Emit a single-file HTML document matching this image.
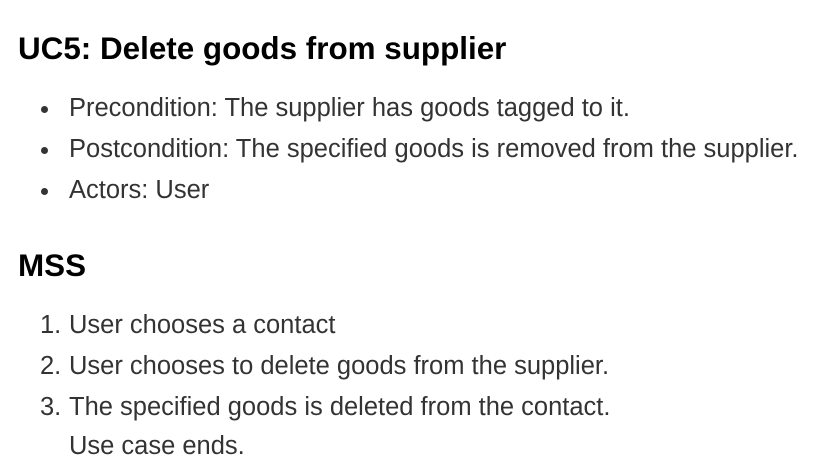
<!DOCTYPE html>
<html><head><style>
body{margin:0;width:823px;height:470px;background:#fff;font-family:"Liberation Sans",Arial,sans-serif;position:relative;overflow:hidden}
.h{position:absolute;left:18px;font-weight:bold;font-size:31.4px;color:#000;white-space:nowrap;line-height:1}
.t{position:absolute;left:69px;font-size:25.5px;color:#333;white-space:nowrap;line-height:1}
.b{position:absolute;left:41px;width:7px;height:7px;border-radius:50%;background:#333}
.n{position:absolute;font-size:25.5px;color:#333;line-height:1}
</style></head><body>
<div class="h" style="top:33px">UC5: Delete goods from supplier</div>
<div class="b" style="top:106px"></div><div class="t" style="top:96px">Precondition: The supplier has goods tagged to it.</div>
<div class="b" style="top:147px"></div><div class="t" style="top:137px">Postcondition: The specified goods is removed from the supplier.</div>
<div class="b" style="top:188px"></div><div class="t" style="top:178px">Actors: User</div>
<div class="h" style="top:250px">MSS</div>
<div class="n" style="left:40px;top:313px">1.</div><div class="t" style="top:313px">User chooses a contact</div>
<div class="n" style="left:40px;top:354px">2.</div><div class="t" style="top:354px">User chooses to delete goods from the supplier.</div>
<div class="n" style="left:40px;top:395px">3.</div><div class="t" style="top:395px">The specified goods is deleted from the contact.</div>
<div class="t" style="top:434px">Use case ends.</div>
</body></html>
